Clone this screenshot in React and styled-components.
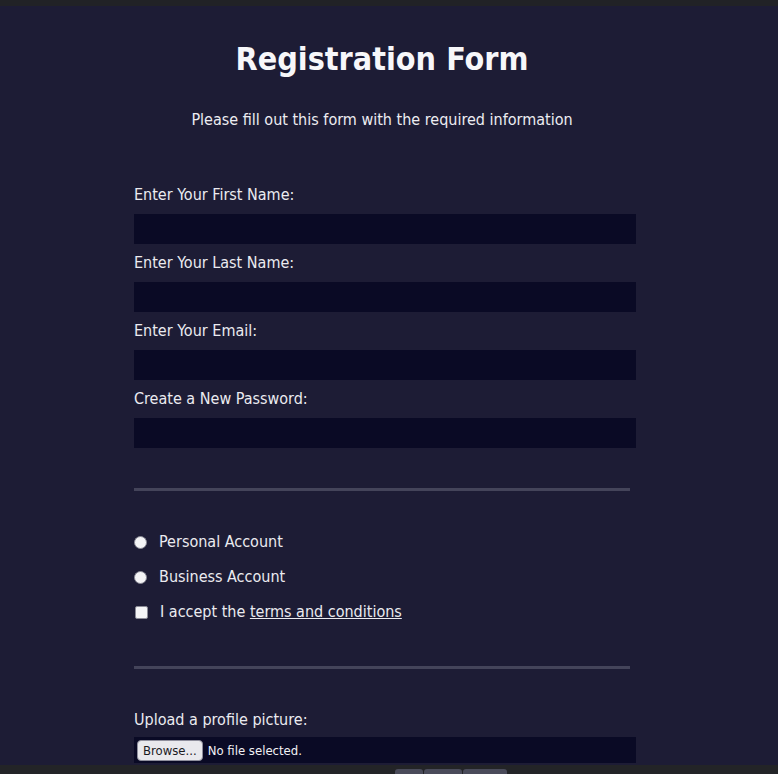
import styled, { createGlobalStyle } from "styled-components";

const GlobalStyle = createGlobalStyle`
  html, body {
    margin: 0;
    padding: 0;
    background: #1d1c35;
  }
  body {
    font-family: "DejaVu Sans Condensed", "DejaVu Sans", sans-serif;
    color: #f2f2f5;
    overflow: hidden;
  }
`;

function App() {
  return (
    <>
      <GlobalStyle />
      <TopStrip />
      <Page>
        <Title>Registration Form</Title>
        <Subtitle>Please fill out this form with the required information</Subtitle>

        <Form>
          <Field>
            <Label htmlFor="first">Enter Your First Name:</Label>
            <Input id="first" type="text" />
          </Field>
          <Field>
            <Label htmlFor="last">Enter Your Last Name:</Label>
            <Input id="last" type="text" />
          </Field>
          <Field>
            <Label htmlFor="email">Enter Your Email:</Label>
            <Input id="email" type="email" />
          </Field>
          <Field>
            <Label htmlFor="pass">Create a New Password:</Label>
            <Input id="pass" type="password" />
          </Field>

          <Divider />

          <Options>
            <Option>
              <Radio name="account" />
              Personal Account
            </Option>
            <Option>
              <Radio name="account" />
              Business Account
            </Option>
            <Option>
              <Check />
              <span>
                I accept the <Terms href="#">terms and conditions</Terms>
              </span>
            </Option>
          </Options>

          <Divider />

          <Field $offset={2}>
            <Label>Upload a profile picture:</Label>
            <FileBox>
              <BrowseButton type="button">Browse...</BrowseButton>
              <FileName>No file selected.</FileName>
            </FileBox>
          </Field>
        </Form>
      </Page>

      <BottomBar>
        <BarTabs>
          <BarTab $w={28} />
          <BarTab $w={38} />
          <BarTab $w={44} />
        </BarTabs>
      </BottomBar>
    </>
  );
}

export default App;

// Styled Components

const TopStrip = styled.div`
  height: 6px;
  background: #212226;
`;

const Page = styled.main`
  width: 502px;
  margin-left: 134px;
`;

const Title = styled.h1`
  margin: 34px 0 0;
  padding-right: 6px;
  text-align: center;
  font-size: 32px;
  line-height: 38px;
  font-weight: bold;
  color: #f7f7fa;
`;

const Subtitle = styled.p`
  margin: 32px 0 0;
  padding-right: 6px;
  text-align: center;
  font-size: 16px;
  line-height: 20px;
  color: #ededf2;
`;

const Form = styled.form`
  margin-top: 55px;
  display: flex;
  flex-direction: column;
`;

const Field = styled.div`
  display: flex;
  flex-direction: column;
  margin: ${(p) => p.$offset || 0}px 0 9px;
`;

const Label = styled.label`
  font-size: 16px;
  line-height: 20px;
  margin-bottom: 9px;
  color: #ebebf0;
`;

const Input = styled.input`
  height: 30px;
  border: none;
  padding: 0 8px;
  background: #0a0a25;
  color: #fff;
  outline: none;
`;

const Divider = styled.hr`
  width: 496px;
  margin: 31px 0 39px;
  border: none;
  height: 3px;
  background: #44445a;
  align-self: flex-start;
`;

const Options = styled.div`
  display: flex;
  flex-direction: column;
  gap: 15px;
  margin: 2px 0 13px;
`;

const Option = styled.label`
  display: flex;
  align-items: center;
  gap: 12px;
  font-size: 16px;
  line-height: 20px;
  color: #ebebf0;
`;

const Radio = styled.input.attrs({ type: "radio" })`
  appearance: none;
  width: 13px;
  height: 13px;
  margin: 0;
  border-radius: 50%;
  background: #f4f4f6;
  border: 1px solid #8a8a96;
  box-sizing: border-box;
`;

const Check = styled.input.attrs({ type: "checkbox" })`
  appearance: none;
  width: 13px;
  height: 13px;
  margin: 0 0 0 1px;
  border-radius: 2px;
  background: #f4f4f6;
  border: 1px solid #8a8a96;
  box-sizing: border-box;
`;

const Terms = styled.a`
  color: #ebebf0;
  text-decoration: underline;
`;

const FileBox = styled.div`
  height: 26px;
  margin-top: -2px;
  background: #0a0a25;
  display: flex;
  align-items: center;
  padding: 0 3px;
  gap: 5px;
`;

const BrowseButton = styled.button`
  height: 21px;
  padding: 0 5px;
  font-family: "DejaVu Sans Condensed", "DejaVu Sans", sans-serif;
  font-size: 13px;
  color: #1b1b1f;
  background: #e9e9ed;
  border: 1px solid #8f8f9d;
  border-radius: 4px;
`;

const FileName = styled.span`
  font-size: 13px;
  color: #f2f2f5;
`;

const BottomBar = styled.div`
  position: fixed;
  left: 0;
  right: 0;
  bottom: 0;
  height: 9px;
  background: #232427;
`;

const BarTabs = styled.div`
  position: absolute;
  left: 395px;
  top: 4px;
  display: flex;
  gap: 1px;
`;

const BarTab = styled.div`
  width: ${(p) => p.$w}px;
  height: 8px;
  background: #4a4b5a;
  border-radius: 3px 3px 0 0;
`;
